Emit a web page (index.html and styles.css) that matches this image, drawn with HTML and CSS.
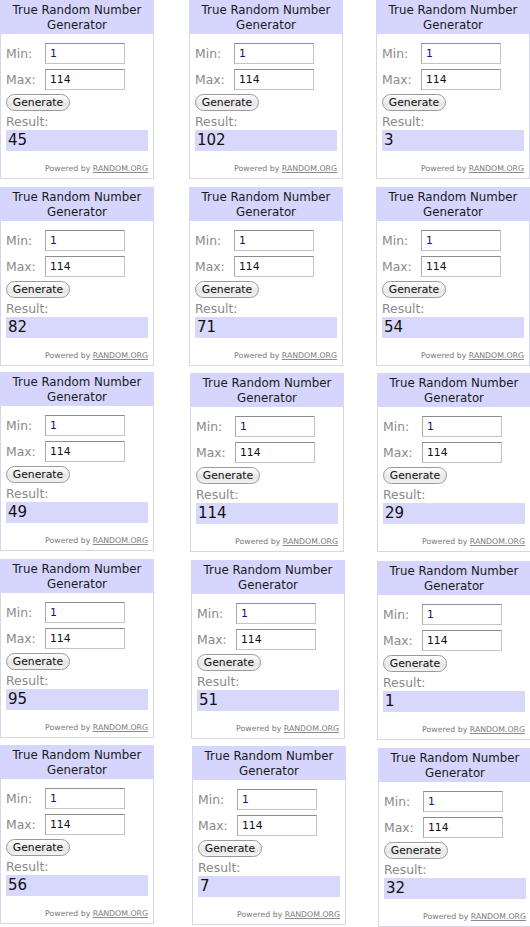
FILE: index.html
```html
<!DOCTYPE html>
<html>
<head>
<meta charset="utf-8">
<link rel="stylesheet" href="styles.css">
</head>
<body>
<div class="collage">
  <div class="rng"><div class="head">True Random Number<br>Generator</div><div class="body"><div class="row"><span class="lbl">Min:</span><span class="inp min">1</span></div><div class="row"><span class="lbl">Max:</span><span class="inp">114</span></div><span class="btn">Generate</span><div class="lbl res-lbl">Result:</div><div class="result">45</div><div class="powered">Powered by <u>RANDOM.ORG</u></div></div></div>
  <div class="rng"><div class="head">True Random Number<br>Generator</div><div class="body"><div class="row"><span class="lbl">Min:</span><span class="inp min">1</span></div><div class="row"><span class="lbl">Max:</span><span class="inp">114</span></div><span class="btn">Generate</span><div class="lbl res-lbl">Result:</div><div class="result">102</div><div class="powered">Powered by <u>RANDOM.ORG</u></div></div></div>
  <div class="rng"><div class="head">True Random Number<br>Generator</div><div class="body"><div class="row"><span class="lbl">Min:</span><span class="inp min">1</span></div><div class="row"><span class="lbl">Max:</span><span class="inp">114</span></div><span class="btn">Generate</span><div class="lbl res-lbl">Result:</div><div class="result">3</div><div class="powered">Powered by <u>RANDOM.ORG</u></div></div></div>

  <div class="rng"><div class="head">True Random Number<br>Generator</div><div class="body"><div class="row"><span class="lbl">Min:</span><span class="inp min">1</span></div><div class="row"><span class="lbl">Max:</span><span class="inp">114</span></div><span class="btn">Generate</span><div class="lbl res-lbl">Result:</div><div class="result">82</div><div class="powered">Powered by <u>RANDOM.ORG</u></div></div></div>
  <div class="rng"><div class="head">True Random Number<br>Generator</div><div class="body"><div class="row"><span class="lbl">Min:</span><span class="inp min">1</span></div><div class="row"><span class="lbl">Max:</span><span class="inp">114</span></div><span class="btn">Generate</span><div class="lbl res-lbl">Result:</div><div class="result">71</div><div class="powered">Powered by <u>RANDOM.ORG</u></div></div></div>
  <div class="rng"><div class="head">True Random Number<br>Generator</div><div class="body"><div class="row"><span class="lbl">Min:</span><span class="inp min">1</span></div><div class="row"><span class="lbl">Max:</span><span class="inp">114</span></div><span class="btn">Generate</span><div class="lbl res-lbl">Result:</div><div class="result">54</div><div class="powered">Powered by <u>RANDOM.ORG</u></div></div></div>

  <div class="rng"><div class="head">True Random Number<br>Generator</div><div class="body"><div class="row"><span class="lbl">Min:</span><span class="inp min">1</span></div><div class="row"><span class="lbl">Max:</span><span class="inp">114</span></div><span class="btn">Generate</span><div class="lbl res-lbl">Result:</div><div class="result">49</div><div class="powered">Powered by <u>RANDOM.ORG</u></div></div></div>
  <div class="rng off-x1 off-y1"><div class="head">True Random Number<br>Generator</div><div class="body"><div class="row"><span class="lbl">Min:</span><span class="inp min">1</span></div><div class="row"><span class="lbl">Max:</span><span class="inp">114</span></div><span class="btn">Generate</span><div class="lbl res-lbl">Result:</div><div class="result">114</div><div class="powered">Powered by <u>RANDOM.ORG</u></div></div></div>
  <div class="rng off-x1 off-y1"><div class="head">True Random Number<br>Generator</div><div class="body"><div class="row"><span class="lbl">Min:</span><span class="inp min">1</span></div><div class="row"><span class="lbl">Max:</span><span class="inp">114</span></div><span class="btn">Generate</span><div class="lbl res-lbl">Result:</div><div class="result">29</div><div class="powered">Powered by <u>RANDOM.ORG</u></div></div></div>

  <div class="rng"><div class="head">True Random Number<br>Generator</div><div class="body"><div class="row"><span class="lbl">Min:</span><span class="inp min">1</span></div><div class="row"><span class="lbl">Max:</span><span class="inp">114</span></div><span class="btn">Generate</span><div class="lbl res-lbl">Result:</div><div class="result">95</div><div class="powered">Powered by <u>RANDOM.ORG</u></div></div></div>
  <div class="rng off-x2 off-y1"><div class="head">True Random Number<br>Generator</div><div class="body"><div class="row"><span class="lbl">Min:</span><span class="inp min">1</span></div><div class="row"><span class="lbl">Max:</span><span class="inp">114</span></div><span class="btn">Generate</span><div class="lbl res-lbl">Result:</div><div class="result">51</div><div class="powered">Powered by <u>RANDOM.ORG</u></div></div></div>
  <div class="rng off-x1 off-y2"><div class="head">True Random Number<br>Generator</div><div class="body"><div class="row"><span class="lbl">Min:</span><span class="inp min">1</span></div><div class="row"><span class="lbl">Max:</span><span class="inp">114</span></div><span class="btn">Generate</span><div class="lbl res-lbl">Result:</div><div class="result">1</div><div class="powered">Powered by <u>RANDOM.ORG</u></div></div></div>

  <div class="rng"><div class="head">True Random Number<br>Generator</div><div class="body"><div class="row"><span class="lbl">Min:</span><span class="inp min">1</span></div><div class="row"><span class="lbl">Max:</span><span class="inp">114</span></div><span class="btn">Generate</span><div class="lbl res-lbl">Result:</div><div class="result">56</div><div class="powered">Powered by <u>RANDOM.ORG</u></div></div></div>
  <div class="rng off-x3 off-y1"><div class="head">True Random Number<br>Generator</div><div class="body"><div class="row"><span class="lbl">Min:</span><span class="inp min">1</span></div><div class="row"><span class="lbl">Max:</span><span class="inp">114</span></div><span class="btn">Generate</span><div class="lbl res-lbl">Result:</div><div class="result">7</div><div class="powered">Powered by <u>RANDOM.ORG</u></div></div></div>
  <div class="rng off-x2 off-y3"><div class="head">True Random Number<br>Generator</div><div class="body"><div class="row"><span class="lbl">Min:</span><span class="inp min">1</span></div><div class="row"><span class="lbl">Max:</span><span class="inp">114</span></div><span class="btn">Generate</span><div class="lbl res-lbl">Result:</div><div class="result">32</div><div class="powered">Powered by <u>RANDOM.ORG</u></div></div></div>
</div>
</body>
</html>
```

FILE: styles.css
```css
html, body {
  margin: 0;
  padding: 0;
  background: #ffffff;
}

body {
  width: 530px;
  height: 927px;
  overflow: hidden;
  font-family: "DejaVu Sans", "Liberation Sans", sans-serif;
}

.collage {
  display: grid;
  grid-template-columns: 189px 187px 154px;
  grid-template-rows: 187px 185px 187px 186px auto;
}

.rng {
  width: 154px;
  height: 179px;
  box-sizing: border-box;
  border: 1px solid #d6d6e6;
  border-top: none;
  background: #ffffff;
  display: flex;
  flex-direction: column;
}

.off-x1 { margin-left: 1px; }
.off-x2 { margin-left: 2px; }
.off-x3 { margin-left: 3px; }
.off-y1 { margin-top: 1px; }
.off-y2 { margin-top: 2px; }
.off-y3 { margin-top: 3px; }

.head {
  height: 34px;
  margin: 0 -1px;
  background: #d5d5fd;
  color: #1a1a1a;
  font-size: 11.8px;
  line-height: 15px;
  text-align: center;
  padding-top: 3px;
  box-sizing: border-box;
}

.body {
  display: flex;
  flex-direction: column;
  align-items: flex-start;
  padding: 9px 5px 0 5px;
}

.row {
  display: flex;
  align-items: center;
  height: 21px;
  margin-bottom: 5px;
}

.row + .row {
  margin-bottom: 4px;
}

.lbl {
  color: #8a8a8a;
  font-size: 12.4px;
  line-height: 14px;
  width: 39px;
  padding-top: 1px;
}

.inp {
  width: 80px;
  height: 21px;
  box-sizing: border-box;
  border: 1px solid #c4c4c4;
  border-top-color: #8c8c8c;
  border-left-color: #a8a8a8;
  font-size: 10.8px;
  line-height: 19px;
  padding-left: 4px;
  color: #111;
}

.inp.min {
  color: #0a1a6a;
}

.btn {
  width: 64px;
  height: 17px;
  box-sizing: border-box;
  border: 1px solid #9a9a9a;
  border-radius: 9px;
  background: linear-gradient(#ffffff, #e6e6e6 60%, #f2f2f2);
  font-size: 10.8px;
  line-height: 15px;
  text-align: center;
  color: #111;
}

.res-lbl {
  width: auto;
  margin-top: 4px;
  height: 14px;
  padding-top: 0;
}

.result {
  margin-top: 1px;
  width: 142px;
  height: 21px;
  background: #d8d8fc;
  font-size: 15px;
  line-height: 21px;
  padding-left: 2px;
  box-sizing: border-box;
  color: #111;
}

.powered {
  align-self: flex-end;
  margin-top: 13px;
  margin-right: 0;
  font-size: 7.8px;
  color: #7a7a7a;
  line-height: 9px;
}

.powered u {
  text-decoration-color: #8a8a8a;
}
```
